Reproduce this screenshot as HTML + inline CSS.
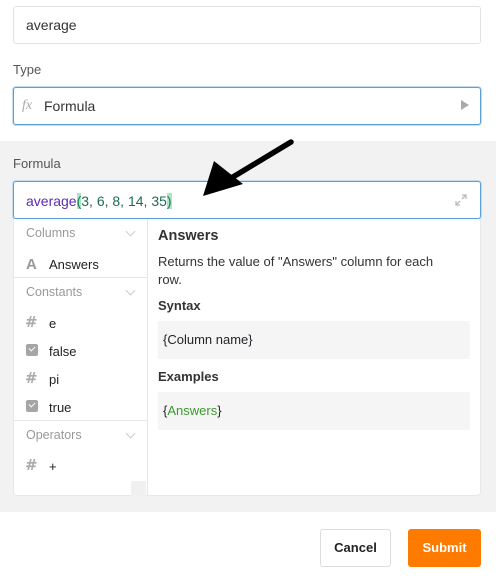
<!DOCTYPE html>
<html><head><style>
body{margin:0;width:496px;height:578px;position:relative;background:#fff;font-family:"Liberation Sans",sans-serif;color:#212529;overflow:hidden}
.a{position:absolute}
.grey{left:0;top:141px;width:496px;height:371px;background:#f2f2f2}
.inp{box-sizing:border-box;background:#fff;border:1px solid #e2e2e2;border-radius:3px}
.focus{border:1px solid #5aa0d8;box-shadow:0 0 0 1px #c6ddf0}
.lbl{font-size:13px;color:#555}
.item{font-size:13px;color:#222}
.sec{font-size:12.5px;color:#999}
.chev{width:6px;height:6px;border-right:1px solid #ccc;border-bottom:1px solid #ccc;transform:rotate(45deg)}
.hash{font-size:15px;color:#aaa;font-weight:bold;font-family:"DejaVu Sans",sans-serif}
.cb{width:12px;height:12px;background:#a5a5a5;border-radius:2px}
.cb:after{content:"";position:absolute;left:3px;top:2px;width:5px;height:3px;border-left:1.5px solid #fff;border-bottom:1.5px solid #fff;transform:rotate(-45deg)}
.code{background:#f5f5f5;left:158px;width:312px;height:38px;font-size:13px;line-height:38px;text-indent:5px}
</style></head><body>
<div class="a inp" style="left:13px;top:6px;width:468px;height:38px"></div>
<div class="a item" style="left:26px;top:17px;font-size:14px;color:#333">average</div>
<div class="a lbl" style="left:13px;top:62px">Type</div>
<div class="a inp focus" style="left:13px;top:87px;width:468px;height:38px"></div>
<div class="a" style="left:22px;top:98px;font-size:14px;color:#aaa;font-style:italic;font-family:'Liberation Serif',serif">fx</div>
<div class="a" style="left:44px;top:98px;font-size:14px;color:#333">Formula</div>
<div class="a" style="left:461px;top:100px;width:0;height:0;border-left:8px solid #aaa;border-top:5px solid transparent;border-bottom:5px solid transparent"></div>
<div class="a grey"></div>
<div class="a lbl" style="left:13px;top:156px">Formula</div>
<div class="a inp focus" style="left:13px;top:181px;width:468px;height:38px"></div>
<div class="a" style="left:26px;top:193px;font-size:14px;color:#5b2bb5">average<span style="background:#a8e6c6;color:#1f7a55">(</span><span style="color:#1f6b50">3, 6, 8, 14, 35</span><span style="background:#a8e6c6;color:#1f7a55">)</span></div>
<svg class="a" style="left:455px;top:194px" width="12" height="12" viewBox="0 0 12 12"><path d="M7 1h4v4M11 1L7 5M5 11H1V7M1 11l4-4" stroke="#bbb" fill="none" stroke-width="1.3"/></svg>
<div class="a" style="left:13px;top:219px;width:468px;height:277px;background:#fff;border:1px solid #e8e8e8;border-top:none;box-sizing:border-box;border-radius:0 0 4px 4px"></div>
<div class="a" style="left:147px;top:219px;width:1px;height:277px;background:#e6e6e6"></div>
<div class="a sec" style="left:26px;top:226px">Columns</div><div class="a chev" style="left:127px;top:228px"></div>
<div class="a" style="left:26px;top:256px;font-size:15px;color:#999;font-weight:bold">A</div>
<div class="a item" style="left:49px;top:257px">Answers</div>
<div class="a" style="left:13px;top:277px;width:134px;height:1px;background:#e6e6e6"></div>
<div class="a sec" style="left:26px;top:285px">Constants</div><div class="a chev" style="left:127px;top:287px"></div>
<div class="a hash" style="left:25px;top:313px">#</div><div class="a item" style="left:49px;top:316px">e</div>
<div class="a cb" style="left:26px;top:344px"></div><div class="a item" style="left:49px;top:344px">false</div>
<div class="a hash" style="left:25px;top:369px">#</div><div class="a item" style="left:49px;top:372px">pi</div>
<div class="a cb" style="left:26px;top:400px"></div><div class="a item" style="left:49px;top:400px">true</div>
<div class="a" style="left:13px;top:420px;width:134px;height:1px;background:#e6e6e6"></div>
<div class="a sec" style="left:26px;top:428px">Operators</div><div class="a chev" style="left:127px;top:430px"></div>
<div class="a hash" style="left:25px;top:456px">#</div><div class="a item" style="left:49px;top:459px">+</div>
<div class="a" style="left:131px;top:481px;width:15px;height:15px;background:#f0f0f0"></div>
<div class="a" style="left:158px;top:228px;font-size:14.5px;font-weight:bold;color:#333">Answers</div>
<div class="a" style="left:158px;top:253px;width:300px;font-size:13px;line-height:18px;color:#333">Returns the value of "Answers" column for each row.</div>
<div class="a" style="left:158px;top:298px;font-size:13px;font-weight:bold;color:#333">Syntax</div>
<div class="a code" style="top:321px">{Column name}</div>
<div class="a" style="left:158px;top:369px;font-size:13px;font-weight:bold;color:#333">Examples</div>
<div class="a code" style="top:392px">{<span style="color:#3a9a30">Answers</span>}</div>
<svg class="a" style="left:0;top:0" width="496" height="578"><path d="M291 142L228 180" stroke="#000" stroke-width="5.5" stroke-linecap="round"/><path d="M203 196L214 161L243 184Z" fill="#000"/></svg>
<div class="a" style="left:320px;top:529px;width:71px;height:38px;box-sizing:border-box;border:1px solid #ddd;border-radius:3px;font-size:13px;font-weight:bold;line-height:36px;text-align:center;color:#222">Cancel</div>
<div class="a" style="left:408px;top:529px;width:73px;height:38px;background:#ff7b00;border-radius:3px;font-size:13px;font-weight:bold;line-height:38px;text-align:center;color:#fff">Submit</div>
</body></html>
